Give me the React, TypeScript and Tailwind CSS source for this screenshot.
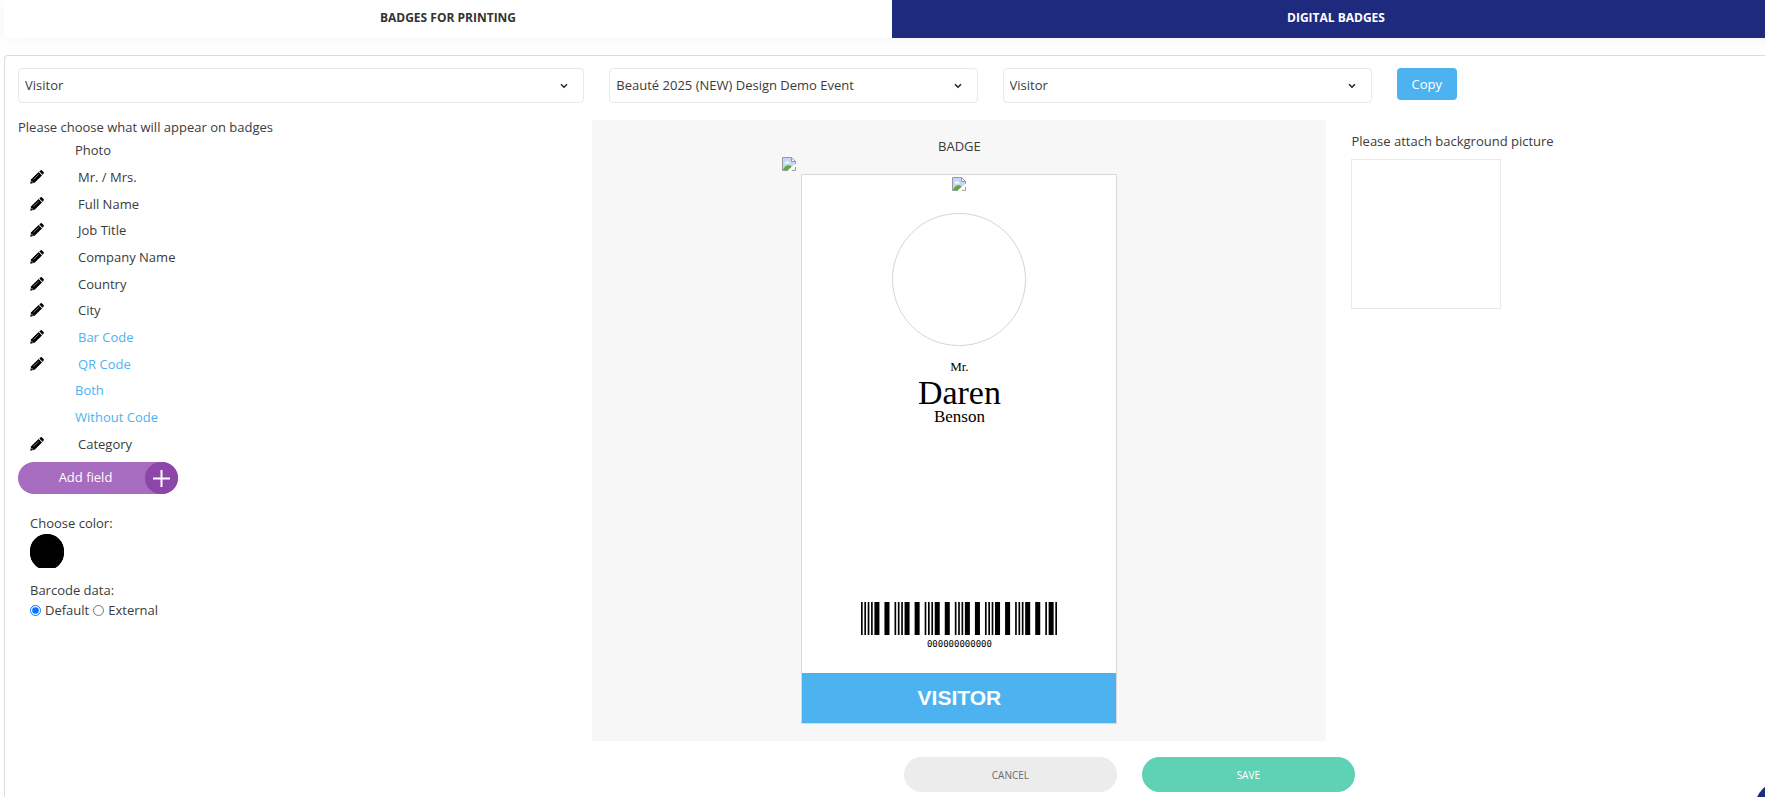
import { useState } from "react";

type Field = { label: string; editable: boolean; code?: boolean };

const FIELDS: Field[] = [
  { label: "Photo", editable: false },
  { label: "Mr. / Mrs.", editable: true },
  { label: "Full Name", editable: true },
  { label: "Job Title", editable: true },
  { label: "Company Name", editable: true },
  { label: "Country", editable: true },
  { label: "City", editable: true },
  { label: "Bar Code", editable: true, code: true },
  { label: "QR Code", editable: true, code: true },
  { label: "Both", editable: false, code: true },
  { label: "Without Code", editable: false, code: true },
  { label: "Category", editable: true },
];

// Interleaved 2 of 5: bar/space widths in modules, starting with a bar
const START = [1, 1, 1, 1];
const ZERO_PAIR = [1, 1, 1, 1, 3, 3, 3, 3, 1, 1];
const STOP = [3, 1, 1];

function getBars(pairs: number) {
  const widths = [...START];
  for (let i = 0; i < pairs; i++) widths.push(...ZERO_PAIR);
  widths.push(...STOP);

  const bars: { x: number; w: number }[] = [];
  let x = 0;
  widths.forEach((w, i) => {
    if (i % 2 === 0) bars.push({ x, w });
    x += w;
  });
  return bars;
}

function Barcode() {
  return (
    <svg className="w-[196px] h-[33px]" viewBox="0 0 117 33" preserveAspectRatio="none" aria-hidden="true">
      {getBars(6).map((bar) => (
        <rect key={bar.x} x={bar.x} y="0" width={bar.w} height="33" fill="#000" />
      ))}
    </svg>
  );
}

function PencilIcon() {
  return (
    <svg className="w-3.5 h-3.5" viewBox="0 0 14 14" aria-hidden="true">
      <path d="M8.600 2 12 5.400 4.600 12.700.2 13.800 1.200 9.200z" fill="#000" />
      <path d="M9.300 1.400 10.500.4c.4-.4 1-.4 1.400 0L13.600 2c.4.4.4 1 0 1.400L12.600 4.700z" fill="#000" />
      <path d="M3.600 9.500 8.700 4.500" stroke="#fff" strokeWidth=".5" />
      <path d="M1.600 11.200 2.900 12.500" stroke="#fff" strokeWidth=".9" />
    </svg>
  );
}

function MissingImage() {
  return (
    <svg className="w-3.5 h-3.5" viewBox="0 0 14 14" role="img" aria-label="">
      <path d="M1 1h8.5L13 4.5V8L7.5 13H1z" fill="#c6d6f6" />
      <path d="M2.500 6.500c0-1 .7-1.600 1.500-1.600.3-1 1.900-1 2.200 0 .9 0 1.300.7 1.300 1.600z" fill="#fff" />
      <path d="M1 13c1-2.800 3.200-4.700 5.500-4.700 1.600 0 2.600.5 3.300 1.700L6.500 13z" fill="#5bab3a" />
      <path d="M.5 13.500V.5h9l4 4V7" fill="none" stroke="#9a9a9a" />
      <path d="M9.500.5v4h4z" fill="#fff" stroke="#9a9a9a" />
      <path d="M.5 13.500H6M10 13.500h3.500V10" fill="none" stroke="#9a9a9a" />
      <path d="M7 13.500 13.500 8" fill="none" stroke="#fff" strokeWidth="2" />
    </svg>
  );
}

function SelectBox({ label, options }: { label: string; options: string[] }) {
  return (
    <div className="relative">
      <select
        aria-label={label}
        className="block w-full h-[35px] pl-1.5 pr-8 pb-0.5 appearance-none rounded border border-[#e9e9e9] bg-white text-[13px] text-[#3b3b3b]"
      >
        {options.map((option) => (
          <option key={option}>{option}</option>
        ))}
      </select>
      <svg
        className="absolute right-4 top-[15px] w-2 h-[6px] pointer-events-none"
        viewBox="0 0 8 6"
        fill="none"
        stroke="#222"
        strokeWidth="1.500"
      >
        <path d="M1 1.200 4 4.200 7 1.200" />
      </svg>
    </div>
  );
}

export default function App() {
  const [source, setSource] = useState("default");
  const [color, setColor] = useState("#000000");

  return (
    <div className="min-h-screen overflow-hidden bg-white font-['Open_Sans',sans-serif] text-[13px] leading-5 text-[#3b3b3b]">
      <div className="ml-1 -mr-[15px] min-h-screen flex flex-col">
        {/* Tabs */}
        <div className="grid grid-cols-2 h-[38px] shadow-[0_0_20px_rgba(0,0,0,0.05)]">
          <button className="pb-0.5 bg-white text-xs font-bold text-[#333]">BADGES FOR PRINTING</button>
          <button className="pb-0.5 bg-[#1e2a7d] text-xs font-bold text-white">DIGITAL BADGES</button>
        </div>

        <div className="mt-[17px] flex-1 rounded-t border border-b-0 border-[#dcdcdc] bg-white pt-3">
          {/* Copy from another event */}
          <div className="grid grid-cols-9">
            <div className="col-span-3 pl-[13px] pr-3">
              <SelectBox label="Category" options={["Visitor"]} />
            </div>
            <div className="col-span-2 px-[13px]">
              <SelectBox label="Event" options={["Beauté 2025 (NEW) Design Demo Event"]} />
            </div>
            <div className="col-span-2 pl-3 pr-[13px]">
              <SelectBox label="Event category" options={["Visitor"]} />
            </div>
            <div className="col-span-2 px-3">
              <button className="h-8 w-[60px] rounded bg-[#4db3f0] text-white">Copy</button>
            </div>
          </div>

          <div className="mt-[17px] mr-3 grid grid-cols-12">
            {/* Fields */}
            <div className="col-span-4 pl-[13px]">
              <p className="-mt-[3px] h-5">Please choose what will appear on badges</p>
              <ul className="h-80 grid grid-rows-12">
                {FIELDS.map((field) => (
                  <li key={field.label} className="flex items-center pl-3">
                    {field.editable && (
                      <button aria-label={`Edit ${field.label}`} className="w-12 text-black">
                        <PencilIcon />
                      </button>
                    )}
                    <span className={field.editable ? (field.code ? "text-[#4db3f0]" : "") : field.code ? "pl-[45px] text-[#4db3f0]" : "pl-[45px]"}>
                      {field.label}
                    </span>
                  </li>
                ))}
              </ul>

              <button className="mt-[5px] flex h-8 w-40 items-center rounded-full bg-[#a76bbf] text-white">
                <span className="flex-1 pl-2 pb-0.5">Add field</span>
                <span className="flex h-8 w-[33px] items-center justify-center rounded-full bg-[#8c45a8]">
                  <svg className="w-[17px] h-[17px]" viewBox="0 0 17 17" stroke="#fff" strokeWidth="2">
                    <path d="M8.500 0v17M0 8.500h17" />
                  </svg>
                </span>
              </button>

              <div className="pl-3 mt-[19px]">
                <label htmlFor="badge-color" className="block">Choose color:</label>
                <div className="mt-px h-[34px] w-[34px] overflow-hidden">
                  <input
                    id="badge-color"
                    type="color"
                    value={color}
                    onChange={(e) => setColor(e.target.value)}
                    className="block h-9 w-[34px] appearance-none rounded-full bg-black p-0 [&::-webkit-color-swatch]:border-0 [&::-webkit-color-swatch-wrapper]:p-0 [&::-webkit-color-swatch]:rounded-full"
                  />
                </div>
              </div>

              <fieldset className="pl-3 mt-3">
                <legend>Barcode data:</legend>
                <div className="flex items-center gap-1">
                  <input
                    id="src-default"
                    type="radio"
                    name="source"
                    className="m-0 h-[11px] w-[11px]"
                    checked={source === "default"}
                    onChange={() => setSource("default")}
                  />
                  <label htmlFor="src-default">Default</label>
                  <input
                    id="src-external"
                    type="radio"
                    name="source"
                    className="m-0 h-[11px] w-[11px]"
                    checked={source === "external"}
                    onChange={() => setSource("external")}
                  />
                  <label htmlFor="src-external">External</label>
                </div>
              </fieldset>
            </div>

            {/* Badge preview */}
            <div className="col-span-5 bg-[#f7f7f7] pt-4 pb-[17px]">
              <h2 className="text-center">BADGE</h2>
              <div className="mx-auto w-[354px]">
                <div className="h-[18px] pt-px">
                  <MissingImage />
                </div>
                <div className="mx-auto flex h-[550px] w-[316px] flex-col items-center border border-[#d9d9d9] bg-white text-black">
                  <div className="h-[38px] pt-0.5">
                    <MissingImage />
                  </div>
                  <div className="h-[133px] w-[134px] rounded-full border border-[#d5d5d5]" />
                  <div className="mt-3 flex-1 text-center font-['Liberation_Serif',serif]">
                    <p className="text-[13px] leading-[18px]">Mr.</p>
                    <p className="text-[34px] leading-[34px]">Daren</p>
                    <p className="text-[17px] leading-[14px]">Benson</p>
                  </div>
                  <Barcode />
                  <p className="mt-1 mb-6 text-[9px] leading-[10px] font-['DejaVu_Sans_Mono',monospace]">000000000000</p>
                  <div className="flex h-[50px] w-full items-center justify-center bg-[#4db3f0] font-['Liberation_Sans',sans-serif] text-[21px] font-bold text-white">
                    VISITOR
                  </div>
                </div>
              </div>
            </div>

            {/* Background */}
            <div className="col-span-3 pl-[25px] pt-[11px]">
              <label htmlFor="background" className="block">Please attach background picture</label>
              <label htmlFor="background" className="relative mt-2 block h-[150px] w-[150px] border border-[#e9e9e9]">
                <input
                  id="background"
                  type="file"
                  accept="image/*"
                  className="absolute inset-0 h-full w-full cursor-pointer opacity-0"
                />
              </label>
            </div>
          </div>

          <div className="mt-4 flex text-[10px]">
            <div className="w-1/2" />
            <button className="ml-3 h-[35px] w-[12%] rounded-full bg-[#ececec] text-[#6b6b6b]">CANCEL</button>
            <button className="ml-[25px] h-[35px] w-[12%] rounded-full bg-[#5fd2b5] text-white">SAVE</button>
          </div>
        </div>
      </div>

      <button aria-label="Help" className="fixed -right-[49px] -bottom-[43px] h-[60px] w-[60px] rounded-full bg-[#1e2a7d]" />
    </div>
  );
}
